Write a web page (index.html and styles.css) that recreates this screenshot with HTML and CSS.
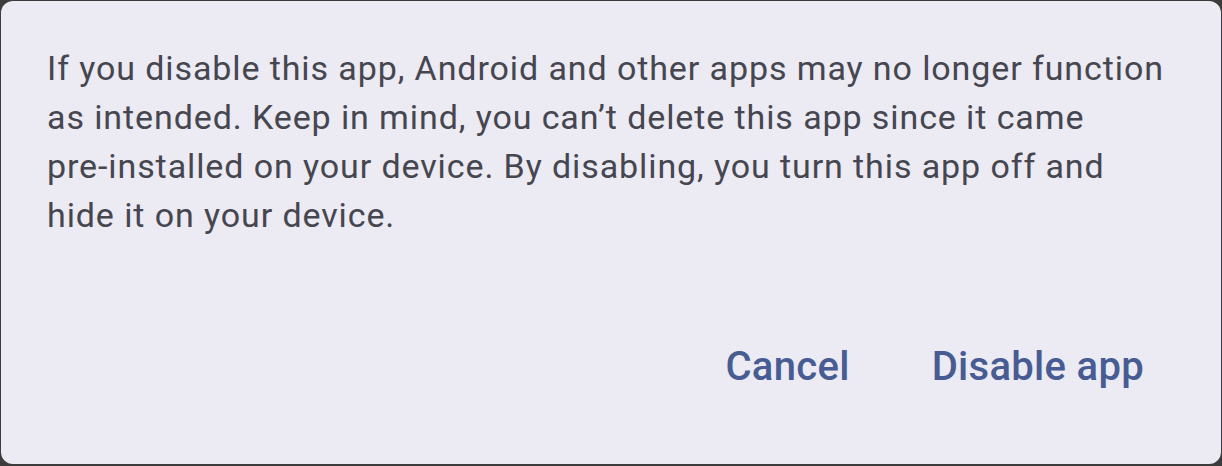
FILE: index.html
```html
<!DOCTYPE html>
<html>
<head>
    <title>Disable app</title>
    <link rel="stylesheet" href="styles.css">
</head>
<body>
    <div class="dialog">
        <p class="message">If you disable this app, Android and other apps may no longer function as intended. Keep in mind, you can’t delete this app since it came <span class="nobr">pre-installed</span> on your device. By disabling, you turn this app off and hide it on your device.</p>
        <div class="actions">
            <button class="btn">Cancel</button>
            <button class="btn">Disable app</button>
        </div>
    </div>
</body>
</html>
```

FILE: styles.css
```css
html, body {
    height: 100%;
}
body {
    margin: 0;
    background: #3c3c3c;
    padding: 1px 1px 2px 1px;
    box-sizing: border-box;
}
.dialog {
    height: 100%;
    box-sizing: border-box;
    background: #ECEAF3;
    border-radius: 12px;
    padding: 43px 46px 0 46px;
    font-family: Roboto, "Noto Sans", sans-serif;
}
.message {
    margin: 0;
    font-size: 34px;
    line-height: 49px;
    letter-spacing: 0.9px;
    color: #45464F;
    width: 1130px;
}
.nobr {
    white-space: nowrap;
}
.actions {
    display: flex;
    justify-content: flex-end;
    gap: 82px;
    margin-top: 103px;
    padding-right: 31px;
}
.btn {
    background: none;
    border: none;
    padding: 0;
    font-family: Roboto, sans-serif;
    font-weight: 500;
    font-size: 40px;
    letter-spacing: 0.3px;
    color: #475C92;
    cursor: pointer;
}
```
